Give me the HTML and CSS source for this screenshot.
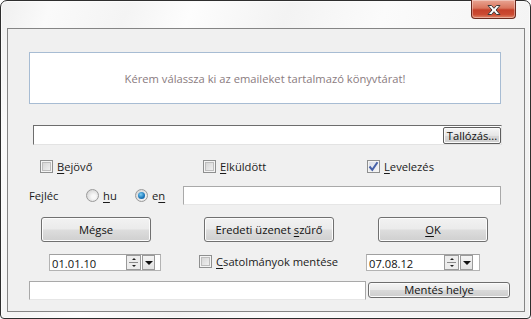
FILE: index.html
```html
<!DOCTYPE html>
<html lang="hu">
<head>
<meta charset="utf-8">
<title>Dialog</title>
<link rel="stylesheet" href="styles.css">
</head>
<body>
<div class="window">
  <div class="titlebar">
    <div class="close">
      <svg width="16" height="12" viewBox="0 0 16 12"><path d="M2 1.5 H5.5 L8 4.3 L10.5 1.5 H14 L10 6 L14 10.5 H10.5 L8 7.7 L5.5 10.5 H2 L6 6 Z" fill="#fff" stroke="#3a3a3a" stroke-width="1" stroke-linejoin="round"/></svg>
    </div>
  </div>
  <div class="client">
    <div class="msg">Kérem válassza ki az emaileket tartalmazó könyvtárat!</div>

    <div class="path">
      <div class="browse">Tallózás...</div>
    </div>

    <div class="row checks">
      <label class="chk c1"><span class="box"></span><span><u>B</u>ejövő</span></label>
      <label class="chk c2"><span class="box"></span><span><u>E</u>lküldött</span></label>
      <label class="chk c3"><span class="box checked"><svg width="11" height="11" viewBox="0 0 11 11"><path d="M1.5 5.5 L4.3 8.8 L9.5 1.2" fill="none" stroke="#4661a8" stroke-width="2"/></svg></span><span><u>L</u>evelezés</span></label>
    </div>

    <div class="row header">
      <span class="hlabel">Fejléc</span>
      <label class="rad r1"><span class="dot"></span><span><u>h</u>u</span></label>
      <label class="rad r2"><span class="dot on"></span><span>e<u>n</u></span></label>
      <div class="field hfield"></div>
    </div>

    <div class="row buttons">
      <div class="btn b1"><span>Mégse</span></div>
      <div class="btn b2"><span>Eredeti üzenet <u>s</u>zűrő</span></div>
      <div class="btn b3"><span><u>O</u>K</span></div>
    </div>

    <div class="row dates">
      <div class="date d1">
        <span class="dtext">01.01.10</span>
        <span class="spin"><span class="up"></span><span class="down"></span></span>
        <span class="drop"></span>
      </div>
      <label class="chk c4"><span class="box"></span><span><u>C</u>satolmányok mentése</span></label>
      <div class="date d2">
        <span class="dtext">07.08.12</span>
        <span class="spin"><span class="up"></span><span class="down"></span></span>
        <span class="drop"></span>
      </div>
    </div>

    <div class="row bottom">
      <div class="field bfield"></div>
      <div class="savebtn"><span>Mentés helye</span></div>
    </div>
  </div>
</div>
</body>
</html>
```

FILE: styles.css
```css
* { box-sizing: border-box; }
html, body { margin: 0; padding: 0; }
body {
  width: 531px;
  height: 319px;
  background: #ffffff;
  font-family: "Open Sans", "Noto Sans", sans-serif;
  font-size: 11.2px;
  color: #1b1b1b;
  overflow: hidden;
}
u { text-decoration: underline; text-underline-offset: 1.5px; }

.window {
  width: 531px;
  height: 319px;
  border: 1px solid #2e2e2e;
  border-radius: 7px 7px 4px 4px;
  background: linear-gradient(110deg, #efefef 0%, #fafafa 8%, #f4f4f4 20%, #fdfdfd 30%, #f3f3f3 45%, #fbfbfb 60%, #f5f5f5 80%, #efefef 100%);
  display: flex;
  flex-direction: column;
  box-shadow: inset 0 0 0 1px #fbfbfb;
}
.titlebar {
  height: 27px;
  display: flex;
  justify-content: flex-end;
  padding-right: 14px;
}
.close {
  width: 45px;
  height: 19px;
  margin-top: -1px;
  border: 1px solid #6b2a1e;
  border-top: none;
  border-radius: 0 0 4px 4px;
  background: linear-gradient(#e9a593 0%, #d9755d 45%, #c5402a 55%, #cb4a31 80%, #e0876a 100%);
  box-shadow: inset 0 0 0 1px rgba(255,255,255,0.35);
  display: flex;
  align-items: center;
  justify-content: center;
}
.close svg { margin-top: 1px; }

.client {
  margin: 0 5px 5px 6px;
  height: 284px;
  border: 1px solid #858585;
  background: #f0f0f0;
  display: flex;
  flex-direction: column;
}

.msg {
  margin: 23px 0 0 21px;
  width: 472px;
  height: 52px;
  background: #fff;
  border: 1px solid #a7bcd3;
  color: #8a7b80;
  display: flex;
  align-items: center;
  justify-content: center;
  padding-top: 1px;
}

.path {
  margin: 21px 0 0 25px;
  width: 469px;
  height: 20px;
  background: #fff;
  border: 1px solid #e3e3e3;
  border-top-color: #6d6d6d;
  border-left-color: #6d6d6d;
  display: flex;
  justify-content: flex-end;
  align-items: flex-start;
  padding: 1px 0 0 0;
}
.browse {
  width: 58px;
  height: 17px;
  border: 1px solid #5d5d5d;
  border-radius: 2px;
  background: linear-gradient(#f7f7f7, #e6e6e6 50%, #d8d8d8 51%, #cfcfcf);
  box-shadow: inset 0 0 0 1px #fbfbfb;
  color: #111;
  display: flex;
  align-items: center;
  justify-content: center;
  line-height: 1;
}

.row { display: flex; align-items: center; }

.chk, .rad { display: flex; align-items: center; gap: 4px; }
.box {
  width: 13px;
  height: 13px;
  border: 1px solid #8e8f8f;
  background: linear-gradient(135deg, #cfcfcf, #f6f6f6);
  box-shadow: inset 0 0 0 1px #f4f4f4, inset 0 0 0 2px #bdbdbd;
  display: flex;
  align-items: center;
  justify-content: center;
  flex: none;
}
.box.checked { background: linear-gradient(135deg, #d6dbe6, #f7f7f7); box-shadow: inset 0 0 0 1px #f4f4f4; }

.checks { margin: 15px 0 0 32px; height: 13px; }
.c1 { width: 163px; }
.c2 { width: 164px; }

.header { margin-top: 13px; height: 19px; padding-left: 21px; }
.hlabel { width: 57px; }
.dot {
  width: 13px;
  height: 13px;
  border-radius: 50%;
  border: 1px solid #9a9a9a;
  background: radial-gradient(circle at 60% 60%, #f8f8f8 20%, #d4d4d4 80%);
  flex: none;
  display: flex;
  align-items: center;
  justify-content: center;
}
.dot.on::after {
  content: "";
  width: 7px;
  height: 7px;
  border-radius: 50%;
  background: radial-gradient(circle at 40% 35%, #7fd0f5 0%, #1f7bbd 55%, #0d4f8e 100%);
}
.r1 { width: 49px; }
.r2 { width: 48px; }
.field {
  background: #fff;
  border: 1px solid #a9a9a9;
  border-bottom-color: #e6e6e6;
}
.hfield { width: 318px; height: 19px; }

.buttons { margin-top: 12px; padding-left: 33px; height: 25px; }
.btn {
  height: 25px;
  border: 1px solid #707070;
  border-radius: 3px;
  background: linear-gradient(#f2f2f2 0%, #ebebeb 48%, #dddddd 52%, #cfcfcf 100%);
  box-shadow: inset 0 0 0 1px #fcfcfc;
  color: #111;
  display: flex;
  align-items: center;
  justify-content: center;
}
.b1 { width: 110px; }
.b2 { width: 130px; margin-left: 53px; }
.b3 { width: 110px; margin-left: 44px; }

.dates { margin-top: 12px; padding-left: 41px; height: 17px; }
.date {
  height: 17px;
  background: #fff;
  border: 1px solid #b3b3b3;
  border-top-color: #a0a0a0;
  display: flex;
  align-items: center;
  padding-left: 2px;
  color: #111;
}
.d1 { width: 112px; }
.d2 { width: 114px; }
.dtext { flex: 1; padding-top: 2px; }
.spin {
  width: 15px;
  height: 15px;
  border: 1px solid #9a9a9a;
  background: #ededed;
  display: flex;
  flex-direction: column;
  align-items: center;
  justify-content: space-around;
  position: relative;
}
.spin::before {
  content: "";
  position: absolute;
  left: 2px; right: 2px; top: 6px;
  height: 1px;
  background: #8a8a8a;
}
.up, .down { width: 0; height: 0; border-left: 2px solid transparent; border-right: 2px solid transparent; }
.up { border-bottom: 2px solid #222; }
.down { border-top: 2px solid #222; }
.drop {
  width: 13px;
  height: 15px;
  margin-left: 1px;
  margin-right: 5px;
  border: 1px solid #9a9a9a;
  background: linear-gradient(#f4f4f4, #e2e2e2);
  display: flex;
  align-items: center;
  justify-content: center;
}
.drop::after {
  content: "";
  width: 0; height: 0;
  border-left: 4px solid transparent;
  border-right: 4px solid transparent;
  border-top: 4px solid #111;
}
.d2 .drop { margin-right: 6px; }
.c4 { margin-left: 38px; width: 167px; align-self: flex-start; }

.bottom { margin-top: 10px; padding-left: 21px; align-items: flex-start; }
.bfield { width: 337px; height: 19px; }
.savebtn {
  margin: 1px 0 0 2px;
  width: 142px;
  height: 16px;
  border: 1px solid #6d6d6d;
  border-radius: 3px;
  background: linear-gradient(#f4f4f4, #e8e8e8 50%, #d9d9d9 51%, #cdcdcd);
  box-shadow: inset 0 0 0 1px #fbfbfb;
  color: #111;
  display: flex;
  align-items: center;
  justify-content: center;
  line-height: 1;
}
```
